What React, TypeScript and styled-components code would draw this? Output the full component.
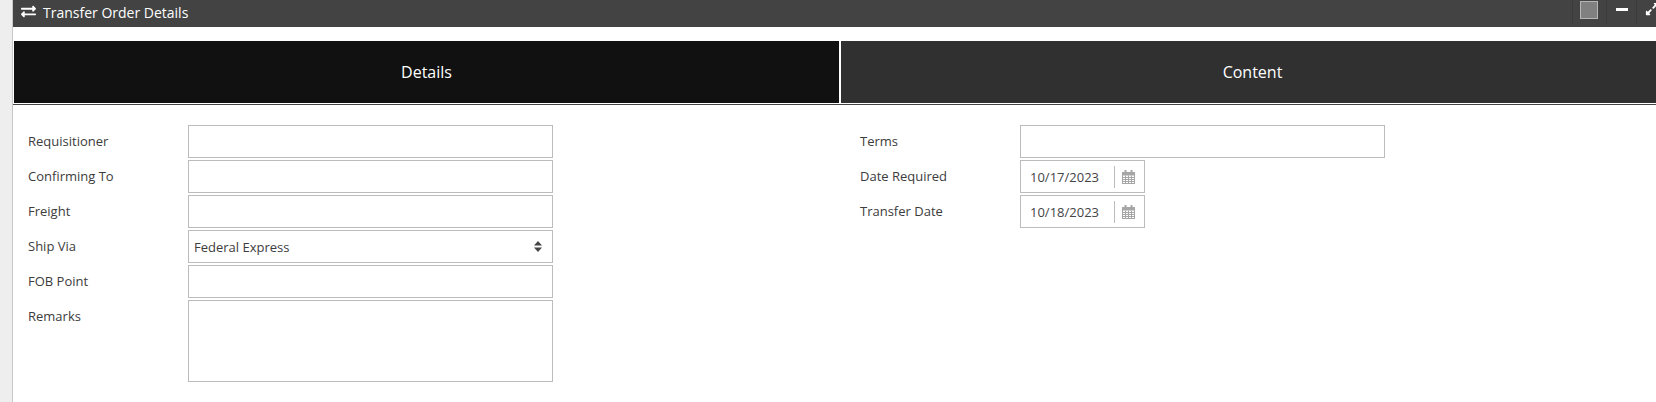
import React from 'react';
import styled, { createGlobalStyle } from 'styled-components';
import { FaExchangeAlt, FaExpandAlt } from 'react-icons/fa';

const GlobalStyle = createGlobalStyle`
  html, body {
    margin: 0;
    padding: 0;
    width: 1656px;
    height: 402px;
    overflow: hidden;
    background: #fff;
  }
  * { box-sizing: border-box; }
`;

const Page = styled.div`
  display: flex;
  width: 1656px;
  height: 402px;
  background: #eeeeee;
  font-family: 'Open Sans', 'Liberation Sans', sans-serif;
`;

const Window = styled.div`
  margin-left: 12px;
  flex: 1;
  min-width: 0;
  background: #fff;
  border-left: 1px solid #c8c8c8;
  display: flex;
  flex-direction: column;
`;

const TitleBar = styled.div`
  height: 27px;
  background: #434343;
  color: #fff;
  display: flex;
  align-items: center;
  padding: 0 0 0 8px;
  font-size: 14px;
  overflow: hidden;
`;

const TitleText = styled.span`
  margin-left: 7px;
  margin-top: -3px;
`;

const TitleIcon = styled(FaExchangeAlt)`
  width: 15px;
  height: 15px;
  margin-top: -4px;
`;

const WindowControls = styled.div`
  margin-left: auto;
  display: flex;
  height: 100%;
  width: 84px;
  flex: none;
`;

const ControlCell = styled.div<{ $width: number }>`
  width: ${(p) => p.$width}px;
  flex: none;
  height: 24px;
  border-left: 1px solid #3b3b3b;
  display: flex;
  align-items: flex-start;
`;

const ColorSwatch = styled.div`
  width: 18px;
  height: 18px;
  margin: 1px 0 0 7px;
  background: #808080;
  border: 1px solid #b5b5b5;
`;

const MinimizeBar = styled.div`
  width: 12px;
  height: 3px;
  margin: 8px 0 0 9px;
  background: #fff;
`;

const ExpandIcon = styled(FaExpandAlt)`
  width: 14px;
  height: 14px;
  margin: 2px 0 0 8px;
  flex: none;
`;

const TabStrip = styled.div`
  display: flex;
  margin: 14px 0 0 1px;
  height: 62px;
  gap: 2px;
  overflow: hidden;
`;

const Tab = styled.div<{ $active?: boolean }>`
  width: ${(p) => (p.$active ? 825 : 823)}px;
  flex: none;
  background: ${(p) => (p.$active ? '#111111' : '#303030')};
  color: #fff;
  font-size: 16px;
  display: flex;
  align-items: center;
  justify-content: center;
`;

const TabRule = styled.div`
  height: 1px;
  margin-top: 1px;
  background: #444444;
`;

const Form = styled.div`
  display: flex;
  padding: 20px 0 0 15px;
`;

const Column = styled.div<{ $width: number }>`
  width: ${(p) => p.$width}px;
  flex: none;
  display: flex;
  flex-direction: column;
  gap: 2px;
`;

const Row = styled.div`
  display: flex;
`;

const Label = styled.label`
  width: 160px;
  flex: none;
  font-size: 13px;
  line-height: 18px;
  padding-top: 7px;
  color: #3c3c3c;
`;

const Field = styled.div`
  height: 33px;
  width: 365px;
  border: 1px solid #bcbcbc;
  background: #fff;
`;

const Remarks = styled(Field)`
  height: 82px;
`;

const SelectField = styled(Field)`
  display: flex;
  align-items: center;
  justify-content: space-between;
  padding: 0 10px 0 5px;
  font-size: 13px;
  color: #3c3c3c;
`;

const DateField = styled(Field)`
  width: 125px;
  display: flex;
  align-items: center;
  padding-left: 9px;
  font-size: 13px;
  color: #444;
`;

const DateValue = styled.span`
  width: 84px;
  flex: none;
`;

const DateIconCell = styled.div`
  height: 22px;
  border-left: 1px solid #bcbcbc;
  padding-left: 7px;
  display: flex;
  align-items: center;
`;

const CalendarIcon = () => (
  <svg width="13" height="14" viewBox="0 0 13 14" fill="none">
    <rect x="0.5" y="2.5" width="12" height="11" fill="#fff" stroke="#a6a6a6" />
    <rect x="0" y="2" width="13" height="3.5" fill="#a6a6a6" />
    <rect x="2.5" y="0" width="2" height="3.5" fill="#a6a6a6" />
    <rect x="8.5" y="0" width="2" height="3.5" fill="#a6a6a6" />
    <path
      d="M3.5 5.5v8M6.5 5.5v8M9.5 5.5v8M0.5 7.5h12M0.5 9.5h12M0.5 11.5h12"
      stroke="#a6a6a6"
      strokeWidth="1"
    />
  </svg>
);

const SortArrows = () => (
  <svg width="8" height="11" viewBox="0 0 8 11" fill="#444">
    <path d="M4 0 8 4.5H0z" />
    <path d="M0 6.5h8L4 11z" />
  </svg>
);

const leftFields = ['Requisitioner', 'Confirming To', 'Freight'];

const App: React.FC = () => {
  return (
    <Page>
      <GlobalStyle />
      <Window>
        <TitleBar>
          <TitleIcon />
          <TitleText>Transfer Order Details</TitleText>
          <WindowControls>
            <ControlCell $width={34}>
              <ColorSwatch />
            </ControlCell>
            <ControlCell $width={30}>
              <MinimizeBar />
            </ControlCell>
            <ControlCell $width={20}>
              <ExpandIcon />
            </ControlCell>
          </WindowControls>
        </TitleBar>
        <TabStrip>
          <Tab $active>Details</Tab>
          <Tab>Content</Tab>
        </TabStrip>
        <TabRule />
        <Form>
          <Column $width={832}>
            {leftFields.map((name) => (
              <Row key={name}>
                <Label>{name}</Label>
                <Field />
              </Row>
            ))}
            <Row>
              <Label>Ship Via</Label>
              <SelectField>
                Federal Express
                <SortArrows />
              </SelectField>
            </Row>
            <Row>
              <Label>FOB Point</Label>
              <Field />
            </Row>
            <Row>
              <Label>Remarks</Label>
              <Remarks />
            </Row>
          </Column>
          <Column $width={530}>
            <Row>
              <Label>Terms</Label>
              <Field />
            </Row>
            <Row>
              <Label>Date Required</Label>
              <DateField>
                <DateValue>10/17/2023</DateValue>
                <DateIconCell>
                  <CalendarIcon />
                </DateIconCell>
              </DateField>
            </Row>
            <Row>
              <Label>Transfer Date</Label>
              <DateField>
                <DateValue>10/18/2023</DateValue>
                <DateIconCell>
                  <CalendarIcon />
                </DateIconCell>
              </DateField>
            </Row>
          </Column>
        </Form>
      </Window>
    </Page>
  );
};

export default App;
